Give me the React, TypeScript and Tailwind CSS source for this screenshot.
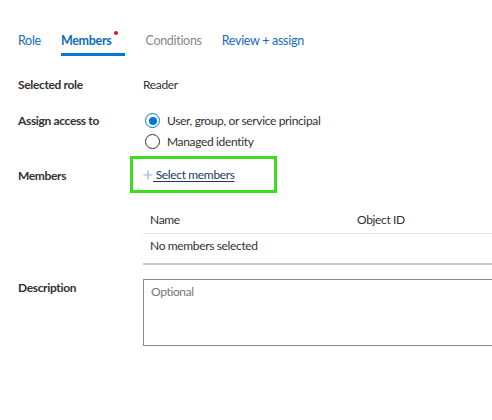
import React from "react";

function Radio({ checked, label }: { checked?: boolean; label: string }) {
  return (
    <div className="flex h-[21px] items-center">
      <span
        className={`flex h-[15px] w-[15px] items-center justify-center rounded-full border ${
          checked ? "border-[#0078d4]" : "border-[#323130]"
        }`}
      >
        {checked && <span className="h-[8px] w-[8px] rounded-full bg-[#0078d4]" />}
      </span>
      <span className="ml-[7px] text-[#323130]">{label}</span>
    </div>
  );
}

export default function App() {
  return (
    <div
      className="h-[420px] w-[492px] overflow-hidden bg-white text-[12px] tracking-[-0.35px] text-[#323130]"
      style={{ fontFamily: 'Lato, "Open Sans", sans-serif' }}
    >
      {/* Tabs */}
      <div className="flex h-[56px] items-end pl-[18px] text-[12.5px] tracking-[-0.3px]">
        <div className="flex h-[24px] items-start gap-[20px]">
          <span className="text-[#0f6cbd]">Role</span>
          <div className="relative flex h-full flex-col">
            <span className="pr-[14px] font-bold text-[#0f6cbd]">Members</span>
            <span className="absolute right-[7px] top-[-1px] h-[4px] w-[4px] rounded-full bg-[#e81123]" />
            <span className="mt-auto h-[3px] w-full bg-[#0078d4]" />
          </div>
          <span className="text-[#8a8886]">Conditions</span>
          <span className="text-[#0f6cbd]">Review + assign</span>
        </div>
      </div>

      <div className="pl-[18px]">
        {/* Selected role */}
        <div className="mt-[18px] flex h-[21px] items-center">
          <div className="w-[125px] font-bold">Selected role</div>
          <div>Reader</div>
        </div>

        {/* Assign access */}
        <div className="mt-[15px] flex">
          <div className="flex h-[21px] w-[127px] items-center font-bold">Assign access to</div>
          <div className="flex flex-col">
            <Radio checked label="User, group, or service principal" />
            <Radio label="Managed identity" />
          </div>
        </div>

        {/* Members */}
        <div className="mt-[4px] flex items-center">
          <div className="w-[112px] pt-[2px] font-bold">Members</div>
          <div className="flex h-[37px] w-[147px] items-center border-[3px] border-[#3ddc1f] pl-[10px]">
            <svg width="10" height="10" viewBox="0 0 10 10" className="shrink-0">
              <path d="M5 0.5V9.5M0.5 5H9.5" stroke="#8ab4e8" strokeWidth="1.2" />
            </svg>
            <span className="text-[#1f3864] underline underline-offset-2">&nbsp;Select members</span>
          </div>
        </div>

        {/* Table */}
        <div className="ml-[125px] mt-[14px]">
          <div className="flex h-[27px] items-center border-b border-[#e6e6e6] pl-[7px]">
            <div className="w-[207px]">Name</div>
            <div>Object ID</div>
          </div>
          <div className="flex h-[31px] items-center border-b-2 border-[#c8c8c8] pl-[7px] pb-[6px]">
            No members selected
          </div>
        </div>

        {/* Description */}
        <div className="mt-[14px] flex">
          <div className="w-[125px] font-bold">Description</div>
          <div className="h-[67px] flex-1 border border-r-0 border-[#8a8886] px-[7px] pt-[3px] text-[#777]">
            Optional
          </div>
        </div>
      </div>
    </div>
  );
}
